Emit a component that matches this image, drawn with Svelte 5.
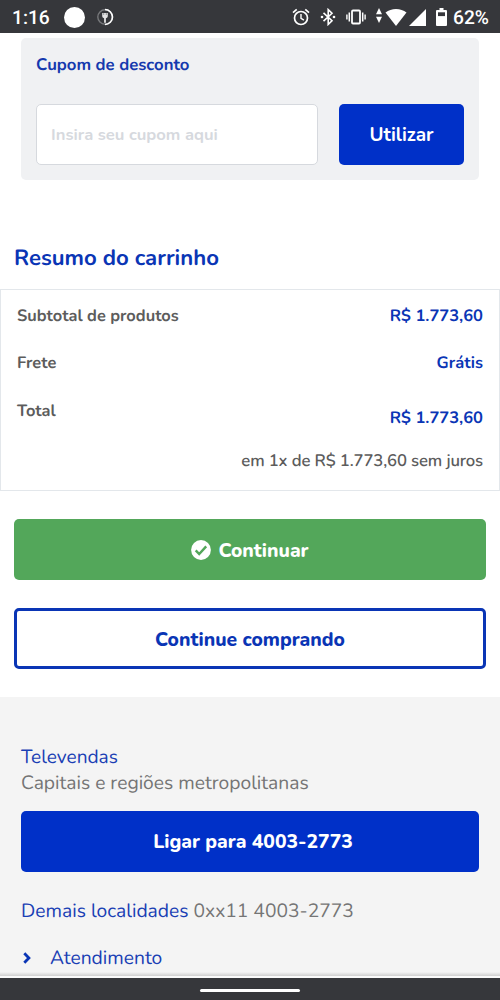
<script>
  const time = '1:16';
  const battery = '62%';

  const price = 'R$ 1.773,60';
  const rows = [
    { label: 'Subtotal de produtos', value: price },
    { label: 'Frete', value: 'Grátis' },
    { label: 'Total', value: price, total: true }
  ];
  const installments = `em 1x de ${price} sem juros`;

  let coupon = '';
</script>

<div class="screen">
  <header class="status">
    <span class="status__time">{time}</span>
    <span class="status__dot"></span>
    <svg class="status__fork" width="18" height="18" viewBox="0 0 18 18">
      <circle cx="9" cy="9" r="7.2" fill="none" stroke="#77787b" stroke-width="1.4" />
      <path d="M9 1.5a7.5 7.5 0 0 1 0 15" fill="none" stroke="#fff" stroke-width="1.6" />
      <path d="M6.2 5h5.6v3.3q0 1.700-1.900 2v4.500H8.100v-4.500q-1.900-.3-1.900-2z" fill="#e4e4e5" />
      <path d="M7.700 5v2M10.300 5v2" stroke="#77787b" stroke-width=".7" />
    </svg>

    <div class="status__icons">
      <svg width="18" height="18" viewBox="0 0 18 18" fill="none" stroke="#fff">
        <circle cx="9" cy="10" r="6.5" stroke-width="1.7" />
        <path d="M9 6v4.300l2.900 1.800" stroke-width="1.4" />
        <path d="M1 4.600 4.700 1.400M17 4.600 13.300 1.400" stroke-width="1.7" />
      </svg>
      <svg width="16" height="18" viewBox="0 0 16 18" fill="none" stroke="#fff">
        <path d="M3.500 4.900 12 12.700 8.200 16.400V1.600L12 5.300 3.500 13.100" stroke-width="1.6" />
        <circle cx="2" cy="9" r="1.3" fill="#fff" stroke="none" />
        <circle cx="14" cy="9" r="1.3" fill="#fff" stroke="none" />
      </svg>
      <svg width="20" height="16" viewBox="0 0 20 16" fill="none" stroke="#fff">
        <rect x="6" y="1.5" width="8" height="13" rx="1" stroke-width="1.8" />
        <path d="M3.300 3.500v9M16.700 3.500v9" stroke-width="1.5" />
        <path d="M.9 5.500v5M19.100 5.500v5" stroke-width="1.4" />
      </svg>
      <svg width="6" height="15" viewBox="0 0 6 15" fill="#fff">
        <path d="M3 0 6 6.300H0zM3 15 0 8.700h6z" />
      </svg>
      <svg width="22" height="17" viewBox="0 0 22 17" fill="#fff">
        <path d="M.5 3.600Q5 0 11 0t10.500 3.600L11 17z" />
      </svg>
      <svg width="17" height="17" viewBox="0 0 17 17" fill="#fff">
        <path d="M17 0v17H0z" />
      </svg>
      <svg width="11" height="18" viewBox="0 0 11 18">
        <path d="M3.500 0h4v2H10q1 0 1 1v14q0 1-1 1H1q-1 0-1-1V3q0-1 1-1h2.500z" fill="#fff" />
        <path d="M2 4.300h7v3.800H2z" fill="#36373b" />
      </svg>
      <span class="status__battery">{battery}</span>
    </div>
  </header>

  <main>
    <section class="coupon">
      <label for="coupon">Cupom de desconto</label>
      <div class="coupon__form">
        <input id="coupon" type="text" placeholder="Insira seu cupom aqui" bind:value={coupon} />
        <button class="btn btn--apply">Utilizar</button>
      </div>
    </section>

    <h2>Resumo do carrinho</h2>

    <section class="summary">
      {#each rows as row}
        <div class="summary__row" class:summary__row--total={row.total}>
          <span>{row.label}</span>
          <strong>{row.value}</strong>
        </div>
      {/each}
      <p>{installments}</p>
    </section>

    <div class="actions">
      <button class="btn btn--continue">
        <svg width="20" height="20" viewBox="0 0 20 20">
          <circle cx="10" cy="10" r="9.9" fill="#fff" />
          <path d="m4.700 10.400 3.500 3.700 7-7.700" fill="none" stroke="#53a75a" stroke-width="2.4" />
        </svg>
        <span>Continuar</span>
      </button>
      <button class="btn btn--outline">Continue comprando</button>
    </div>
  </main>

  <footer>
    <h3>Televendas</h3>
    <p>Capitais e regiões metropolitanas</p>
    <button class="btn btn--call">Ligar para 4003-2773</button>
    <p class="others"><span>Demais localidades</span> 0xx11 4003-2773</p>
    <div class="link">
      <svg width="8" height="12" viewBox="0 0 8 12">
        <path d="m1.300 1.300 4.600 4.700-4.600 4.700" fill="none" stroke="#0a35b5" stroke-width="2.8" />
      </svg>
      <span>Atendimento</span>
    </div>
  </footer>

  <nav class="gesture"><span></span></nav>
</div>

<style>
  :global(body) {
    margin: 0;
    background: #fff;
  }

  .screen {
    width: 500px;
    height: 1000px;
    overflow: hidden;
    display: flex;
    flex-direction: column;
    background: #fff;
    color: #5c5c5c;
    font-family: Nunito, Lato, sans-serif;
    text-rendering: geometricPrecision;
  }

  .screen * {
    box-sizing: border-box;
  }

  svg {
    display: block;
    flex: none;
  }

  h2,
  h3,
  p {
    margin: 0;
  }

  .status {
    flex: none;
    display: flex;
    align-items: center;
    height: 33px;
    padding: 1px 11px 0 12px;
    background: #36373b;
    color: #fff;
    font-family: Roboto, sans-serif;
    font-weight: 500;
  }

  .status__time {
    width: 38px;
    font-size: 19.2px;
    line-height: 33px;
  }

  .status__dot {
    width: 21px;
    height: 21px;
    margin-left: 14px;
    border-radius: 50%;
    background: #fff;
  }

  .status__fork {
    margin-left: 11px;
  }

  .status__icons {
    display: flex;
    align-items: center;
    margin-left: auto;
  }

  .status__icons svg:nth-child(2) {
    margin-left: 10px;
  }

  .status__icons svg:nth-child(3) {
    margin-left: 10px;
  }

  .status__icons svg:nth-child(4) {
    margin: -3px 3px 0 10px;
  }

  .status__icons svg:nth-child(6) {
    margin-left: 2px;
  }

  .status__icons svg:nth-child(7) {
    margin-left: 10px;
  }

  .status__battery {
    width: 36px;
    margin-left: 6px;
    font-size: 19.2px;
    line-height: 33px;
  }

  main {
    flex: none;
    display: flex;
    flex-direction: column;
    height: 664px;
    padding-top: 5px;
  }

  .coupon {
    height: 142px;
    margin: 0 21px;
    padding: 14px 15px 15px;
    border-radius: 5px;
    background: #f0f1f3;
  }

  .coupon label {
    display: block;
    color: #1539ae;
    font-size: 16.7px;
    font-weight: 700;
    line-height: 25px;
  }

  .coupon__form {
    display: flex;
    gap: 21px;
    margin-top: 26.6px;
  }

  input {
    flex: 1;
    min-width: 0;
    height: 61px;
    padding: 0 14px;
    border: 1px solid #d6d9de;
    border-radius: 5px;
    background: #fff;
    color: #5c5c5c;
    font: 700 16.6px Nunito, Lato, sans-serif;
  }

  input::placeholder {
    color: #d6d9de;
    opacity: 1;
  }

  .btn {
    display: flex;
    align-items: center;
    justify-content: center;
    height: 61px;
    padding: 1px 0 0;
    border: 0;
    border-radius: 5px;
    background: #0030c8;
    color: #fff;
    font: 800 19.3px Nunito, Lato, sans-serif;
  }

  .btn--apply {
    width: 125px;
    font-size: 19px;
    font-weight: 700;
  }

  h2 {
    margin: 62px 14px 16px;
    color: #0a35b5;
    font-size: 22.15px;
    font-weight: 700;
    line-height: 32px;
  }

  .summary {
    height: 202px;
    margin-top: -1px;
    padding: 14px 16px 0;
    border: 1px solid #e3e7eb;
    font-size: 16.7px;
  }

  .summary__row {
    display: flex;
    justify-content: space-between;
    height: 47.4px;
    line-height: 24px;
  }

  .summary__row span {
    font-size: 16.4px;
    font-weight: 700;
  }

  .summary__row strong {
    color: #0a35b5;
    font-size: 16.5px;
    font-weight: 700;
  }

  .summary__row--total strong {
    padding-top: 7px;
  }

  .summary p {
    margin-top: 3px;
    font-size: 16.7px;
    font-weight: 600;
    letter-spacing: -0.13px;
    line-height: 24px;
    text-align: right;
  }

  .actions {
    display: flex;
    flex-direction: column;
    gap: 28px;
    padding: 28px 14px 0;
  }

  .btn--continue {
    gap: 7px;
    background: #53a75a;
  }

  .btn--outline {
    border: 3px solid #0a35b5;
    background: #fff;
    color: #0a35b5;
  }

  footer {
    flex: none;
    height: 281px;
    padding: 47px 21px 0;
    background: linear-gradient(#f4f4f4 275px, #cfcfcf 279px, #fafafa 279px);
    color: #757575;
    font-size: 19.25px;
    line-height: 26px;
  }

  h3 {
    color: #1a3fb4;
    font-size: 19.1px;
    font-weight: 400;
    line-height: 26px;
  }

  .btn--call {
    width: 100%;
    margin-top: 15px;
    padding: 0 0 1px 6px;
  }

  .others {
    margin-top: 26px;
  }

  .others span,
  .link {
    color: #1a3fb4;
  }

  .link {
    display: flex;
    align-items: center;
    gap: 19px;
    margin-top: 21px;
    padding-left: 2px;
  }

  .gesture {
    flex: none;
    display: flex;
    justify-content: center;
    height: 22px;
    padding-top: 11px;
    background: #36373b;
  }

  .gesture span {
    width: 100px;
    height: 3px;
    border-radius: 2px;
    background: #fff;
  }
</style>
